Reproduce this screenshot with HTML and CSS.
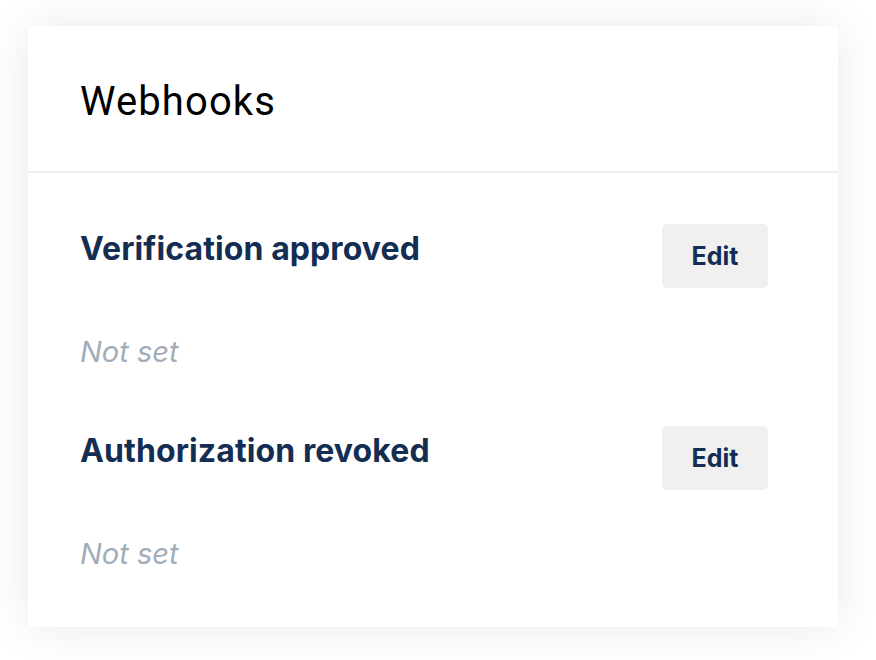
FILE: index.html
```html
<!DOCTYPE html>
<html>
<head>
<meta charset="utf-8">
<link rel="stylesheet" href="styles.css">
</head>
<body>
<div class="card">
  <div class="card-header">
    <h1 class="title">Webhooks</h1>
  </div>
  <div class="card-body">
    <div class="hook">
      <div class="hook-top">
        <h2 class="hook-name">Verification approved</h2>
        <button class="btn">Edit</button>
      </div>
      <div class="hook-value">Not set</div>
    </div>
    <div class="hook">
      <div class="hook-top">
        <h2 class="hook-name">Authorization revoked</h2>
        <button class="btn">Edit</button>
      </div>
      <div class="hook-value">Not set</div>
    </div>
  </div>
</div>
</body>
</html>
```

FILE: styles.css
```css
html, body {
  margin: 0;
  padding: 0;
  background: #ffffff;
}
body {
  padding: 26px 38px 33px 28px;
  font-family: Inter, Roboto, "Liberation Sans", sans-serif;
}
.card {
  background: #ffffff;
  box-shadow: 0 0 44px rgba(0, 0, 0, 0.09);
}
.card-header {
  padding: 52px 52px 45px;
  border-bottom: 2px solid #efefef;
}
.title {
  margin: 0;
  font-family: Roboto, "Liberation Sans", sans-serif;
  font-size: 40px;
  line-height: 48px;
  font-weight: 400;
  letter-spacing: 1.1px;
  color: #000;
}
.card-body {
  padding: 51px 70px 0 52px;
}
.hook {
  padding-bottom: 57px;
}
.hook:last-child {
  padding-bottom: 56px;
}
.hook-top {
  display: flex;
  justify-content: space-between;
  align-items: flex-start;
}
.hook-name {
  margin: 5px 0 0;
  font-size: 32px;
  line-height: 40px;
  font-weight: 700;
  letter-spacing: 0.1px;
  color: #142d52;
}
.btn {
  width: 106px;
  height: 64px;
  padding: 0;
  border: none;
  border-radius: 5px;
  background: #f0f0f0;
  color: #142d52;
  font-family: Inter, Roboto, "Liberation Sans", sans-serif;
  font-size: 25px;
  font-weight: 700;
}
.hook-value {
  margin-top: 47px;
  font-size: 29px;
  line-height: 34px;
  font-style: italic;
  color: #a2acb9;
}
```
